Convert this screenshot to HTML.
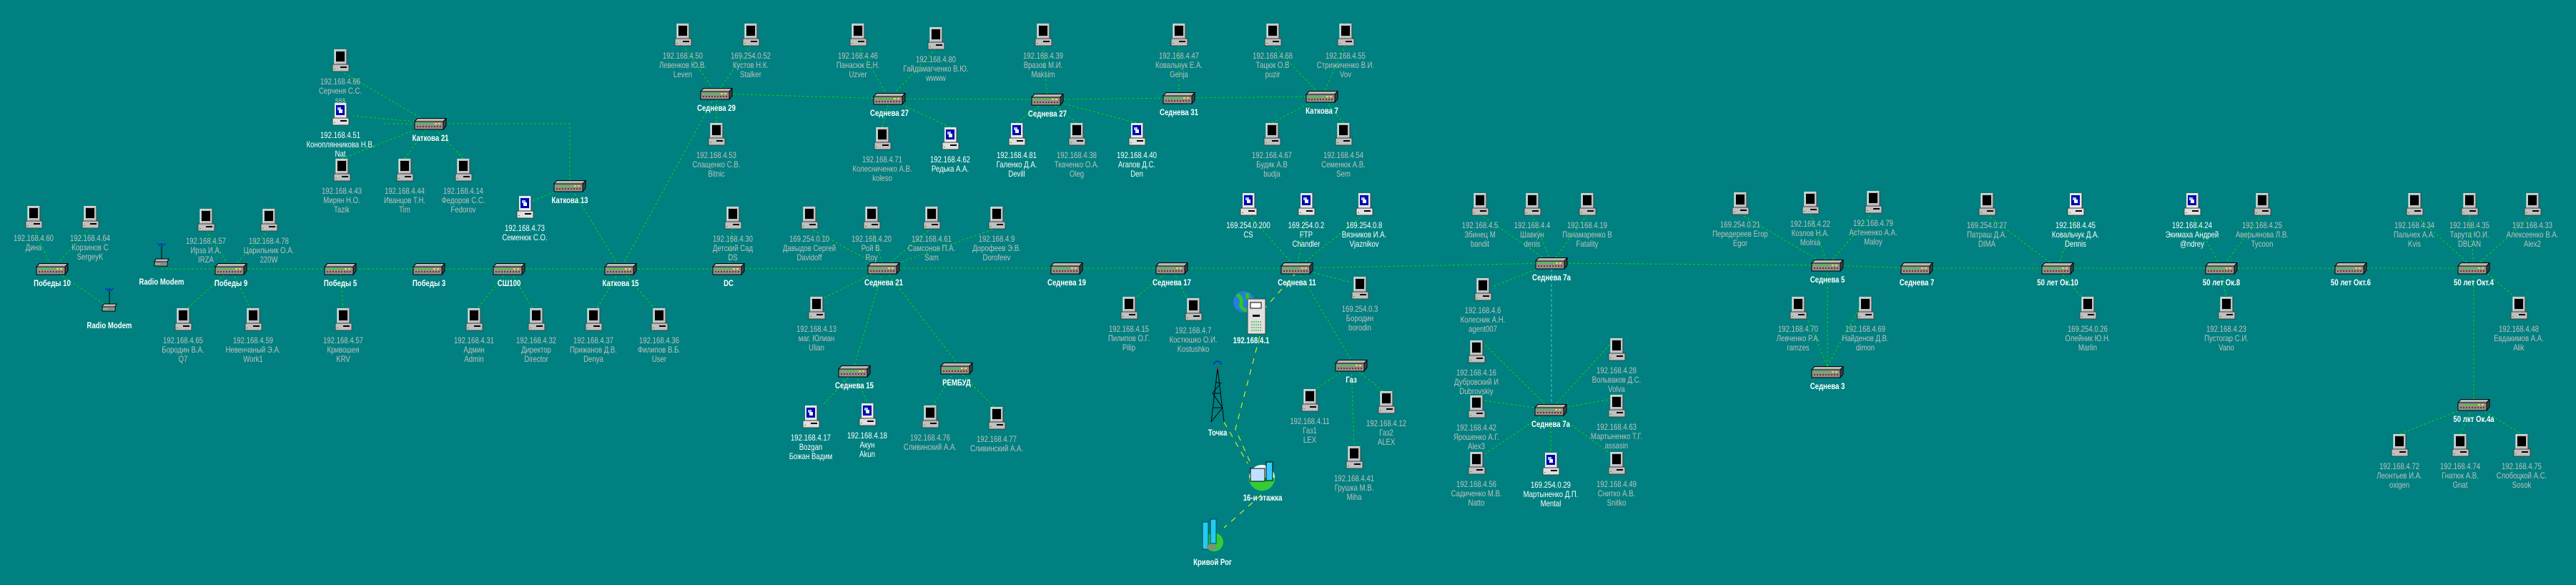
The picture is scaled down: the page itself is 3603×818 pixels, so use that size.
<!DOCTYPE html>
<html><head><meta charset="utf-8"><style>
html,body{margin:0;padding:0}
body{width:3603px;height:818px;background:#008080;position:relative;overflow:hidden;font-family:"Liberation Sans","DejaVu Sans",sans-serif}
svg.bg{position:absolute;left:0;top:0}
.n{position:absolute;width:0;height:0}
.n svg{position:absolute;top:0}
.c svg{left:-14px;width:28px;height:32px}
.h svg{left:-23px;width:46px;height:17px}
.n p{position:absolute;left:0;margin:0;white-space:nowrap;text-align:center;font-size:12px;line-height:13px;color:#c0c0c0;transform:translateX(-50%) scaleX(.8)}
.c p{top:39px}
.h p{top:22px;color:#fff;font-weight:bold}
.o p{color:#fff}
.w{position:absolute;white-space:nowrap;font-size:12px;line-height:13px;color:#fff;font-weight:bold;transform:translateX(-50%) scaleX(.8)}
</style></head><body>
<svg width="0" height="0" style="position:absolute">
<defs>
<symbol id="pc" viewBox="0 0 28 32">
<rect x="6" y="0" width="17" height="21" fill="#c0c0c0"/>
<path d="M6 21V0h17" stroke="#fff" fill="none"/><path d="M23 0v21H6" stroke="#404040" fill="none"/>
<rect x="8" y="3" width="12" height="14" fill="#000"/>
<rect x="3" y="21" width="23" height="10" fill="#c0c0c0" stroke="#404040"/>
<rect x="14" y="24" width="9" height="2" fill="#000"/><rect x="5" y="27" width="2" height="1" fill="#0c0"/>
</symbol>
<symbol id="po" viewBox="0 0 28 32">
<rect x="6" y="0" width="17" height="21" fill="#e8e8e8"/>
<path d="M23 0v21H6" stroke="#404040" fill="none"/>
<rect x="8" y="3" width="12" height="14" fill="#0000b0"/>
<rect x="10" y="6" width="5" height="4" fill="#9cf"/><rect x="12" y="9" width="5" height="5" fill="#fff"/>
<rect x="3" y="21" width="23" height="10" fill="#e0e0e0" stroke="#404040"/>
<rect x="14" y="24" width="9" height="2" fill="#000"/><rect x="5" y="27" width="2" height="1" fill="#0c0"/>
</symbol>
<symbol id="hb" viewBox="0 0 46 17">
<path d="M5 .5H45L41 5H1Z" fill="#b8b8b8" stroke="#000"/>
<path d="M41 5L45 .5V11L41 16Z" fill="#404040" stroke="#000"/>
<rect x="1" y="5" width="40" height="11" fill="#909090" stroke="#000"/>
<path d="M4 8h3M9 8h3M14 8h3M19 8h3M24 8h3" stroke="#0f0" stroke-width="1.5"/>
<path d="M29 8h3M34 8h3" stroke="#ff0" stroke-width="1.5"/>
<path d="M4 12h2M8 12h2M12 12h2M16 12h2M20 12h2M24 12h2M28 12h2M32 12h2M36 12h2" stroke="#800" stroke-width="1.5"/>
</symbol>
<symbol id="rm" viewBox="0 0 24 34">
<path d="M7 2a5 5 0 0 1 10 0M9 4a3 3 0 0 1 6 0" stroke="#00f" fill="none"/>
<path d="M12 3V26" stroke="#000"/>
<path d="M4 22H22L20 26H2Z" fill="#c0c0c0" stroke="#000"/>
<rect x="2" y="26" width="18" height="6" fill="#a0a0a0" stroke="#000"/>
<path d="M4 29h4" stroke="#0f0"/><path d="M10 29h8" stroke="#666"/>
</symbol>
</defs></svg>

<svg class="bg" width="3603" height="818">
<g fill="none" stroke="#00e000" stroke-dasharray="3,3" stroke-width="1">
<path d="M226 376L323 376L476 376L600 376L712 376L868 376L1019 376L1236 375L1492 375L1639 375L1814 375L2170 368L2556 371L2681 375L2878 375L3107 375L3288 375L3460 375"/>
<path d="M868 376L1002 131M868 376L797 260M797 252V173H535M493 162L602 172M1002 131L1244 138L1465 139L1649 137L1849 135"/>
<path d="M1236 375L1195 511M1236 375L1338 507M1814 375L1890 503M1814 375L1890 395M2170 368L2090 400M2556 371V512M3460 375V558M3470 375L3523 420M2878 375L2915 420M3107 375L3114 420"/>
<path d="M73 376L153 430M323 376L262 431M323 376L350 431M476 376L480 431M712 376L668 431M712 376L745 431M868 376L835 431M868 376L915 431M1236 375L1150 418M1195 519L1150 567M1195 519L1213 564M1338 515L1305 567M1338 515L1390 569M1639 375L1590 415M1639 375L1660 417M1890 511L1840 544M1890 511L1935 547M1890 511L1894 624"/>
<path d="M2169 573L2075 480M2169 573L2255 478M2169 573L2075 560M2169 573L2255 558M2169 573L2075 636M2169 573L2169 636M2169 573L2255 636"/>
<path d="M47 318L73 376M126 318L73 376M288 322L323 376M376 322L323 376M1025 319L1019 376M1132 319L1236 375M1219 319L1236 375M1303 319L1236 375M1394 319L1236 375"/>
<path d="M1746 300L1814 375M1827 300L1814 375M1908 300L1814 375M2070 300L2170 368M2143 300L2170 368M2220 300L2170 368M2434 299L2556 371M2532 298L2556 371M2620 297L2556 371M2779 300L2878 375M2903 300L2878 375M3066 300L3107 375M3164 300L3107 375M3377 300L3460 375M3454 300L3460 375M3542 300L3460 375"/>
<path d="M476 99L602 173M478 222L602 173M566 222L602 173M648 222L602 173M734 285L797 260M955 63L1002 131M1050 63L1002 131M1002 172L1002 131M1200 63L1244 138M1309 68L1244 138M1234 178L1244 138M1329 178L1244 138M1459 63L1465 139M1422 172L1465 139M1506 172L1465 139M1590 172L1465 139M1649 63L1649 137M1780 63L1849 135M1882 63L1849 135M1779 172L1849 135M1879 172L1849 135"/>
<path d="M2515 415L2556 512M2609 415L2556 512M3460 566L3356 607M3460 566L3441 607M3460 566L3527 607"/>
</g>
<path d="M2170 376V565" stroke="#4cc" stroke-dasharray="4,3" fill="none"/>
<g fill="none" stroke="#ff0" stroke-dasharray="8,8"><path d="M1814 380L1770 430M1762 470L1728 600L1748 645M1712 590L1745 648M1764 692L1712 738"/></g>
<!-- globe + server -->
<circle cx="1740" cy="422" r="15" fill="#2a7ae0"/><path d="M1730 412q8 4 6 12t8 10M1745 410q-2 8 6 12" stroke="#2c2" stroke-width="5" fill="none"/>
<rect x="1745" y="418" width="25" height="49" fill="#e0e0e0" stroke="#404040"/><rect x="1749" y="423" width="15" height="8" fill="#fff" stroke="#000"/><rect x="1752" y="440" width="10" height="3" fill="#000"/><path d="M1750 450h14M1750 454h14M1750 458h14M1750 462h14" stroke="#0a0" stroke-dasharray="2,1"/>
<!-- tower -->
<path d="M1703 515L1694 590M1703 515L1712 590M1696 570h14M1698 550h10M1700 535h6M1694 590L1710 570L1696 550L1708 535" stroke="#000" fill="none"/><path d="M1698 510a5 5 0 0 1 10 0" stroke="#00f" fill="none"/><circle cx="1703" cy="515" r="1.5" fill="#f00"/>
<!-- 16 etazhka -->
<circle cx="1765" cy="668" r="18" fill="#fff"/><path d="M1747 668a18 18 0 0 0 36 0z" fill="#3c3"/><rect x="1749" y="655" width="20" height="18" fill="#c0e0ff" stroke="#000"/><rect x="1771" y="646" width="9" height="26" fill="#3cf" stroke="#000"/>
<!-- Krivoy Rog -->
<circle cx="1698" cy="758" r="13" fill="#3c3"/><rect x="1682" y="730" width="8" height="38" fill="#2ce" stroke="#046"/><rect x="1693" y="726" width="8" height="34" fill="#2ce" stroke="#046"/><rect x="1688" y="762" width="14" height="6" fill="#888"/>
</svg>

<div class="w" style="left:1750px;top:470px">192.168.4.1</div>
<div class="w" style="left:1703px;top:599px">Точка</div>
<div class="w" style="left:1766px;top:690px">16-и этажка</div>
<div class="w" style="left:1696px;top:780px">Кривой Рог</div>

<div class="n h" style="left:226px;top:330px"><svg style="left:-12px;width:24px;height:34px;top:10px"><use href="#rm"/></svg><p style="top:58px">Radio Modem</p></div>
<div class="n h" style="left:153px;top:393px"><svg style="left:-12px;width:24px;height:34px;top:10px"><use href="#rm"/></svg><p style="top:56px">Radio Modem</p></div>

<div class="n h" style="left:73px;top:368px"><svg><use href="#hb"/></svg><p>Победы 10</p></div>
<div class="n h" style="left:323px;top:368px"><svg><use href="#hb"/></svg><p>Победы 9</p></div>
<div class="n h" style="left:476px;top:368px"><svg><use href="#hb"/></svg><p>Победы 5</p></div>
<div class="n h" style="left:600px;top:368px"><svg><use href="#hb"/></svg><p>Победы 3</p></div>
<div class="n h" style="left:712px;top:368px"><svg><use href="#hb"/></svg><p>СШ100</p></div>
<div class="n h" style="left:868px;top:368px"><svg><use href="#hb"/></svg><p>Каткова 15</p></div>
<div class="n h" style="left:1019px;top:368px"><svg><use href="#hb"/></svg><p>DC</p></div>
<div class="n h" style="left:1236px;top:367px"><svg><use href="#hb"/></svg><p>Седнева 21</p></div>
<div class="n h" style="left:1492px;top:367px"><svg><use href="#hb"/></svg><p>Седнева 19</p></div>
<div class="n h" style="left:1639px;top:367px"><svg><use href="#hb"/></svg><p>Седнева 17</p></div>
<div class="n h" style="left:1814px;top:367px"><svg><use href="#hb"/></svg><p>Седнева 11</p></div>
<div class="n h" style="left:2170px;top:360px"><svg><use href="#hb"/></svg><p>Седнева 7а</p></div>
<div class="n h" style="left:2556px;top:363px"><svg><use href="#hb"/></svg><p>Седнева 5</p></div>
<div class="n h" style="left:2681px;top:367px"><svg><use href="#hb"/></svg><p>Седнева 7</p></div>
<div class="n h" style="left:2878px;top:367px"><svg><use href="#hb"/></svg><p>50 лет Ок.10</p></div>
<div class="n h" style="left:3107px;top:367px"><svg><use href="#hb"/></svg><p>50 лет Ок.8</p></div>
<div class="n h" style="left:3288px;top:367px"><svg><use href="#hb"/></svg><p>50 лет Окт.6</p></div>
<div class="n h" style="left:3460px;top:367px"><svg><use href="#hb"/></svg><p>50 лет Окт.4</p></div>
<div class="n h" style="left:602px;top:165px"><svg><use href="#hb"/></svg><p>Каткова 21</p></div>
<div class="n h" style="left:797px;top:252px"><svg><use href="#hb"/></svg><p>Каткова 13</p></div>
<div class="n h" style="left:1002px;top:123px"><svg><use href="#hb"/></svg><p>Седнева 29</p></div>
<div class="n h" style="left:1244px;top:130px"><svg><use href="#hb"/></svg><p>Седнева 27</p></div>
<div class="n h" style="left:1465px;top:131px"><svg><use href="#hb"/></svg><p>Седнева 27</p></div>
<div class="n h" style="left:1649px;top:129px"><svg><use href="#hb"/></svg><p>Седнева 31</p></div>
<div class="n h" style="left:1849px;top:127px"><svg><use href="#hb"/></svg><p>Каткова 7</p></div>
<div class="n h" style="left:1195px;top:511px"><svg><use href="#hb"/></svg><p>Седнева 15</p></div>
<div class="n h" style="left:1338px;top:507px"><svg><use href="#hb"/></svg><p>РЕМБУД</p></div>
<div class="n h" style="left:1890px;top:503px"><svg><use href="#hb"/></svg><p>Газ</p></div>
<div class="n h" style="left:2169px;top:565px"><svg><use href="#hb"/></svg><p>Седнева 7а</p></div>
<div class="n h" style="left:2556px;top:512px"><svg><use href="#hb"/></svg><p>Седнева 3</p></div>
<div class="n h" style="left:3460px;top:558px"><svg><use href="#hb"/></svg><p>50 лкт Ок.4а</p></div>

<div class="n c" style="left:47px;top:288px"><svg><use href="#pc"/></svg><p>192.168.4.60<br>Дина</p></div>
<div class="n c" style="left:126px;top:288px"><svg><use href="#pc"/></svg><p>192.168.4.64<br>Корзинов С<br>SergeyK</p></div>
<div class="n c" style="left:288px;top:292px"><svg><use href="#pc"/></svg><p>192.168.4.57<br>Ирза И.А.<br>IRZA</p></div>
<div class="n c" style="left:376px;top:292px"><svg><use href="#pc"/></svg><p>192.168.4.78<br>Царильник О.А.<br>220W</p></div>
<div class="n c" style="left:476px;top:69px"><svg><use href="#pc"/></svg><p>192.168.4.66<br>Серченя С.С.<br>sss</p></div>
<div class="n c o" style="left:476px;top:144px"><svg><use href="#po"/></svg><p>192.168.4.51<br>Коноплянникова Н.В.<br>Nat</p></div>
<div class="n c" style="left:478px;top:222px"><svg><use href="#pc"/></svg><p>192.168.4.43<br>Мирян Н.О.<br>Tazik</p></div>
<div class="n c" style="left:566px;top:222px"><svg><use href="#pc"/></svg><p>192.168.4.44<br>Иванцов Т.Н.<br>Tim</p></div>
<div class="n c" style="left:648px;top:222px"><svg><use href="#pc"/></svg><p>192.168.4.14<br>Федоров С.С.<br>Fedorov</p></div>
<div class="n c o" style="left:734px;top:274px"><svg><use href="#po"/></svg><p>192.168.4.73<br>Семенюк С.О.</p></div>
<div class="n c" style="left:955px;top:33px"><svg><use href="#pc"/></svg><p>192.168.4.50<br>Левенков Ю.В.<br>Leven</p></div>
<div class="n c" style="left:1050px;top:33px"><svg><use href="#pc"/></svg><p>169.254.0.52<br>Кустов Н.К.<br>Stalker</p></div>
<div class="n c" style="left:1002px;top:172px"><svg><use href="#pc"/></svg><p>192.168.4.53<br>Спащенко С.В.<br>Bitnic</p></div>
<div class="n c" style="left:1025px;top:289px"><svg><use href="#pc"/></svg><p>192.168.4.30<br>Детский Сад<br>DS</p></div>
<div class="n c" style="left:1132px;top:289px"><svg><use href="#pc"/></svg><p>169.254.0.10<br>Давыдов Сергей<br>Davidoff</p></div>
<div class="n c" style="left:1200px;top:33px"><svg><use href="#pc"/></svg><p>192.168.4.46<br>Панасюк Е.Н.<br>Uzver</p></div>
<div class="n c" style="left:1309px;top:38px"><svg><use href="#pc"/></svg><p>192.168.4.80<br>Гайдамагченко В.Ю.<br>wwww</p></div>
<div class="n c" style="left:1459px;top:33px"><svg><use href="#pc"/></svg><p>192.168.4.39<br>Вразов М.И.<br>Maksim</p></div>
<div class="n c" style="left:1649px;top:33px"><svg><use href="#pc"/></svg><p>192.168.4.47<br>Ковальчук Е.А.<br>Genja</p></div>
<div class="n c" style="left:1780px;top:33px"><svg><use href="#pc"/></svg><p>192.168.4.68<br>Тацюк О.В<br>puzir</p></div>
<div class="n c" style="left:1882px;top:33px"><svg><use href="#pc"/></svg><p>192.168.4.55<br>Стрижиченко В.И.<br>Vov</p></div>
<div class="n c" style="left:1234px;top:178px"><svg><use href="#pc"/></svg><p>192.168.4.71<br>Колесниченко А.В.<br>koleso</p></div>
<div class="n c o" style="left:1329px;top:178px"><svg><use href="#po"/></svg><p>192.168.4.62<br>Редька А.А.</p></div>
<div class="n c o" style="left:1422px;top:172px"><svg><use href="#po"/></svg><p>192.168.4.81<br>Галенко Д.А.<br>Devill</p></div>
<div class="n c" style="left:1506px;top:172px"><svg><use href="#pc"/></svg><p>192.168.4.38<br>Ткаченко О.А.<br>Oleg</p></div>
<div class="n c o" style="left:1590px;top:172px"><svg><use href="#po"/></svg><p>192.168.4.40<br>Агапов Д.С.<br>Den</p></div>
<div class="n c" style="left:1779px;top:172px"><svg><use href="#pc"/></svg><p>192.168.4.67<br>Будяк А.В<br>budja</p></div>
<div class="n c" style="left:1879px;top:172px"><svg><use href="#pc"/></svg><p>192.168.4.54<br>Семенюк А.В.<br>Sem</p></div>
<div class="n c" style="left:1219px;top:289px"><svg><use href="#pc"/></svg><p>192.168.4.20<br>Рой В.<br>Roy</p></div>
<div class="n c" style="left:1303px;top:289px"><svg><use href="#pc"/></svg><p>192.168.4.61<br>Самсонов П.А.<br>Sam</p></div>
<div class="n c" style="left:1394px;top:289px"><svg><use href="#pc"/></svg><p>192.168.4.9<br>Дорофеев Э.В.<br>Dorofeev</p></div>
<div class="n c o" style="left:1746px;top:270px"><svg><use href="#po"/></svg><p>169.254.0.200<br>CS</p></div>
<div class="n c o" style="left:1827px;top:270px"><svg><use href="#po"/></svg><p>169.254.0.2<br>FTP<br>Chandler</p></div>
<div class="n c o" style="left:1908px;top:270px"><svg><use href="#po"/></svg><p>169.254.0.8<br>Вязников И.А.<br>Vjaznikov</p></div>
<div class="n c" style="left:2070px;top:270px"><svg><use href="#pc"/></svg><p>192.168.4.5<br>Збинец М<br>bandit</p></div>
<div class="n c" style="left:2143px;top:270px"><svg><use href="#pc"/></svg><p>192.168.4.4<br>Шавкун<br>denis</p></div>
<div class="n c" style="left:2220px;top:270px"><svg><use href="#pc"/></svg><p>192.168.4.19<br>Панамаренко В<br>Fatality</p></div>
<div class="n c" style="left:2434px;top:269px"><svg><use href="#pc"/></svg><p>169.254.0.21<br>Передереев Егор<br>Egor</p></div>
<div class="n c" style="left:2532px;top:268px"><svg><use href="#pc"/></svg><p>192.168.4.22<br>Козлов Н.А.<br>Molnia</p></div>
<div class="n c" style="left:2620px;top:267px"><svg><use href="#pc"/></svg><p>192.168.4.79<br>Астененко А.А.<br>Maloy</p></div>
<div class="n c" style="left:2779px;top:270px"><svg><use href="#pc"/></svg><p>169.254.0.27<br>Патраш Д.А.<br>DIMA</p></div>
<div class="n c o" style="left:2903px;top:270px"><svg><use href="#po"/></svg><p>192.168.4.45<br>Ковальчук Д.А.<br>Dennis</p></div>
<div class="n c o" style="left:3066px;top:270px"><svg><use href="#po"/></svg><p>192.168.4.24<br>Экимаха Андрей<br>@ndrey</p></div>
<div class="n c" style="left:3164px;top:270px"><svg><use href="#pc"/></svg><p>192.168.4.25<br>Аверьянова Л.В.<br>Tycoon</p></div>
<div class="n c" style="left:3377px;top:270px"><svg><use href="#pc"/></svg><p>192.168.4.34<br>Пальчех А.А.<br>Kvis</p></div>
<div class="n c" style="left:3454px;top:270px"><svg><use href="#pc"/></svg><p>192.168.4.35<br>Тарута Ю.И.<br>DBLAN</p></div>
<div class="n c" style="left:3542px;top:270px"><svg><use href="#pc"/></svg><p>192.168.4.33<br>Алексеенко В.А.<br>Alex2</p></div>

<div class="n c" style="left:256px;top:431px"><svg><use href="#pc"/></svg><p>192.168.4.65<br>Бородин В.А.<br>Q7</p></div>
<div class="n c" style="left:354px;top:431px"><svg><use href="#pc"/></svg><p>192.168.4.59<br>Невенчаный Э.А.<br>Work1</p></div>
<div class="n c" style="left:480px;top:431px"><svg><use href="#pc"/></svg><p>192.168.4.57<br>Кривошея<br>KRV</p></div>
<div class="n c" style="left:663px;top:431px"><svg><use href="#pc"/></svg><p>192.168.4.31<br>Админ<br>Admin</p></div>
<div class="n c" style="left:750px;top:431px"><svg><use href="#pc"/></svg><p>192.168.4.32<br>Директор<br>Director</p></div>
<div class="n c" style="left:830px;top:431px"><svg><use href="#pc"/></svg><p>192.168.4.37<br>Прижанов Д.В.<br>Denya</p></div>
<div class="n c" style="left:922px;top:431px"><svg><use href="#pc"/></svg><p>192.168.4.36<br>Филипов В.Б.<br>User</p></div>
<div class="n c" style="left:1142px;top:415px"><svg><use href="#pc"/></svg><p>192.168.4.13<br>маг. Юлиан<br>Ulian</p></div>
<div class="n c o" style="left:1134px;top:567px"><svg><use href="#po"/></svg><p>192.168.4.17<br>Bozgan<br>Божан Вадим</p></div>
<div class="n c o" style="left:1213px;top:564px"><svg><use href="#po"/></svg><p>192.168.4.18<br>Акун<br>Akun</p></div>
<div class="n c" style="left:1301px;top:567px"><svg><use href="#pc"/></svg><p>192.168.4.76<br>Сливинский А.А.</p></div>
<div class="n c" style="left:1394px;top:569px"><svg><use href="#pc"/></svg><p>192.168.4.77<br>Сливинский А.А.</p></div>
<div class="n c" style="left:1579px;top:415px"><svg><use href="#pc"/></svg><p>192.168.4.15<br>Пилипов О.Г.<br>Pilip</p></div>
<div class="n c" style="left:1669px;top:417px"><svg><use href="#pc"/></svg><p>192.168.4.7<br>Костюшко О.И.<br>Kostushko</p></div>
<div class="n c" style="left:1902px;top:387px"><svg><use href="#pc"/></svg><p>169.254.0.3<br>Бородин<br>borodin</p></div>
<div class="n c" style="left:2074px;top:389px"><svg><use href="#pc"/></svg><p>192.168.4.6<br>Колесник А.Н.<br>agent007</p></div>
<div class="n c" style="left:1832px;top:544px"><svg><use href="#pc"/></svg><p>192.168.4.11<br>Газ1<br>LEX</p></div>
<div class="n c" style="left:1939px;top:547px"><svg><use href="#pc"/></svg><p>192.168.4.12<br>Газ2<br>ALEX</p></div>
<div class="n c" style="left:1894px;top:624px"><svg><use href="#pc"/></svg><p>192.168.4.41<br>Грушка М.В.<br>Miha</p></div>
<div class="n c" style="left:2065px;top:476px"><svg><use href="#pc"/></svg><p>192.168.4.16<br>Дубровский И<br>Dubrovskiy</p></div>
<div class="n c" style="left:2261px;top:473px"><svg><use href="#pc"/></svg><p>192.168.4.28<br>Вольваков Д.С.<br>Volva</p></div>
<div class="n c" style="left:2065px;top:553px"><svg><use href="#pc"/></svg><p>192.168.4.42<br>Ярошенко А.Г.<br>Alex3</p></div>
<div class="n c" style="left:2261px;top:552px"><svg><use href="#pc"/></svg><p>192.168.4.63<br>Мартыненко Т.Г.<br>assasin</p></div>
<div class="n c" style="left:2065px;top:632px"><svg><use href="#pc"/></svg><p>192.168.4.56<br>Садиченко М.В.<br>Natto</p></div>
<div class="n c o" style="left:2169px;top:633px"><svg><use href="#po"/></svg><p>169.254.0.29<br>Мартыненко Д.П.<br>Mental</p></div>
<div class="n c" style="left:2261px;top:632px"><svg><use href="#pc"/></svg><p>192.168.4.49<br>Снитко А.В.<br>Snitko</p></div>
<div class="n c" style="left:2515px;top:415px"><svg><use href="#pc"/></svg><p>192.168.4.70<br>Левченко Р.А.<br>ramzes</p></div>
<div class="n c" style="left:2609px;top:415px"><svg><use href="#pc"/></svg><p>192.168.4.69<br>Найденов Д.В.<br>dimon</p></div>
<div class="n c" style="left:2920px;top:415px"><svg><use href="#pc"/></svg><p>169.254.0.26<br>Олейник Ю.Н.<br>Marlin</p></div>
<div class="n c" style="left:3114px;top:415px"><svg><use href="#pc"/></svg><p>192.168.4.23<br>Пустогар С.И.<br>Vano</p></div>
<div class="n c" style="left:3523px;top:415px"><svg><use href="#pc"/></svg><p>192.168.4.48<br>Евдакимов А.А.<br>Alik</p></div>
<div class="n c" style="left:3356px;top:607px"><svg><use href="#pc"/></svg><p>192.168.4.72<br>Леонтьев И.А.<br>oxigen</p></div>
<div class="n c" style="left:3441px;top:607px"><svg><use href="#pc"/></svg><p>192.168.4.74<br>Гнатюк А.В.<br>Gnat</p></div>
<div class="n c" style="left:3527px;top:607px"><svg><use href="#pc"/></svg><p>192.168.4.75<br>Слобоцкой А.С.<br>Sosok</p></div>
</body></html>
